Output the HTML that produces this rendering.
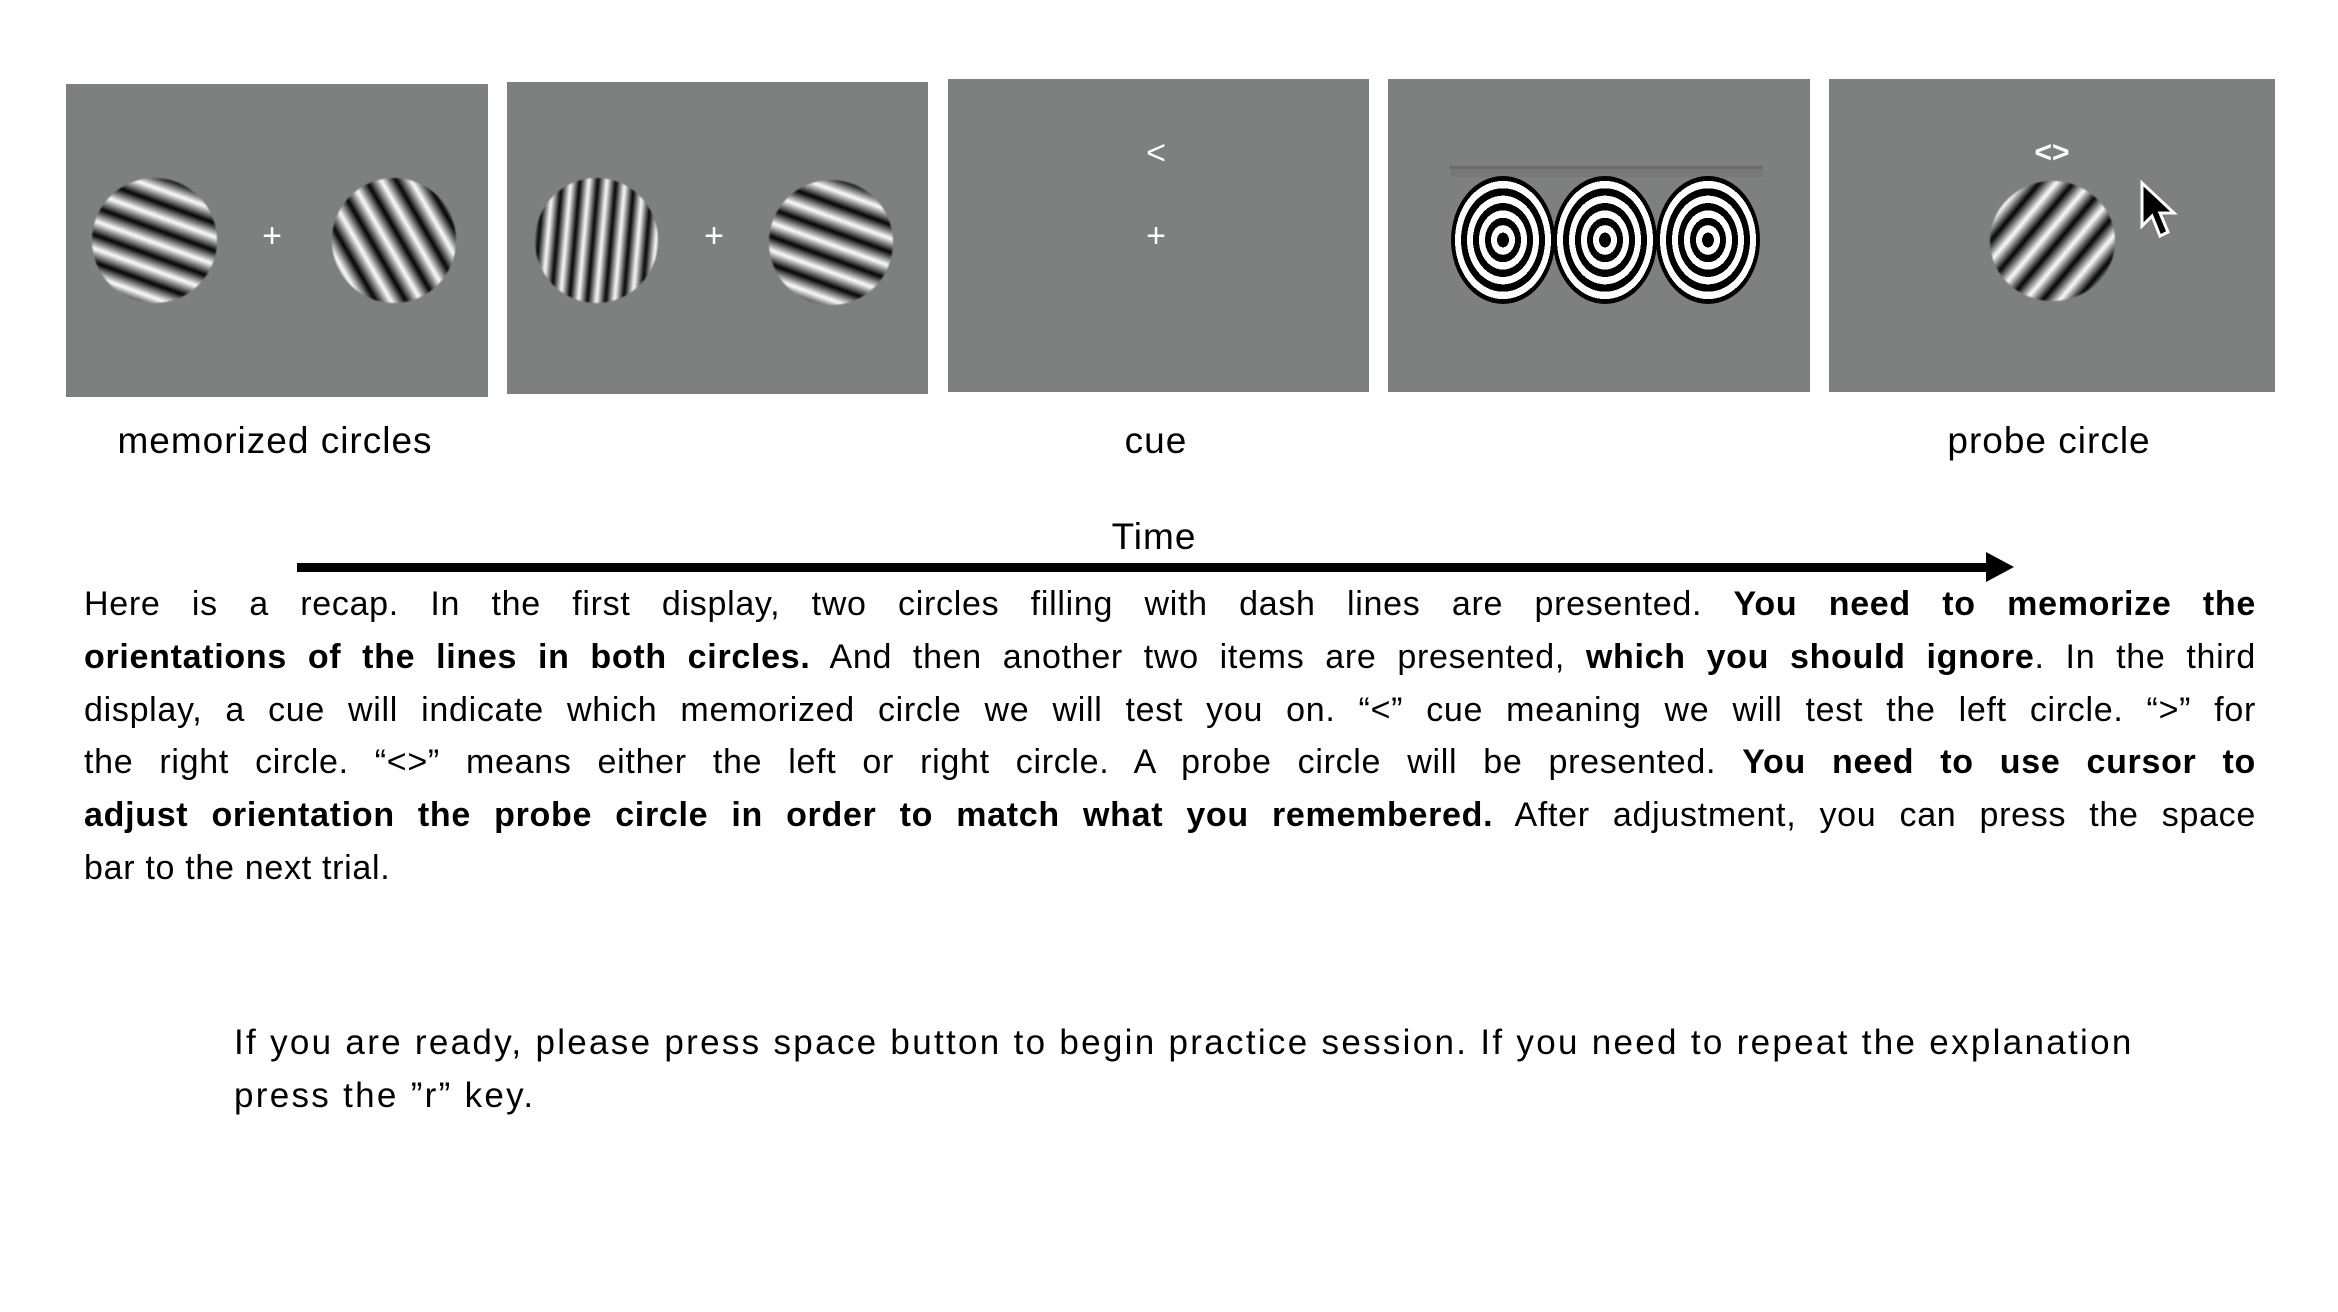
<!DOCTYPE html>
<html><head><meta charset="utf-8"><style>
body{margin:0;width:2338px;height:1312px;background:#fff;position:relative;overflow:hidden;font-family:"Liberation Sans",sans-serif;color:#000}
.p{position:absolute;background:#7e8080}
.g{position:absolute;border-radius:50%;filter:blur(0.8px)}
.plus{position:absolute;color:#fff;font-size:34px;line-height:34px;transform:translate(-50%,-50%)}
.lab{position:absolute;font-size:37px;letter-spacing:1px;transform:translateX(-50%);white-space:nowrap}
.ring{position:absolute;width:104px;height:128px;border-radius:50%;background:repeating-radial-gradient(ellipse at center,#000 0 6px,#fff 6px 12px)}
.para{position:absolute;left:84px;width:2172px;top:578px;font-size:34px;line-height:52.8px;letter-spacing:0.7px}
.para div{text-align:justify;text-align-last:justify}
.para div.last{text-align-last:left}
</style></head><body>
<div class="p" style="left:66px;top:84px;width:422px;height:313px"></div>
<div class="p" style="left:507px;top:82px;width:421px;height:312px"></div>
<div class="p" style="left:948px;top:79px;width:421px;height:313px"></div>
<div class="p" style="left:1388px;top:79px;width:422px;height:313px"></div>
<div class="p" style="left:1829px;top:79px;width:446px;height:313px"></div>

<div class="g" style="left:92px;top:178px;width:125px;height:125px;background:repeating-linear-gradient(20deg,#fff 0,#000 13px,#fff 26px)"></div>
<div class="g" style="left:332px;top:178px;width:124px;height:125px;background:repeating-linear-gradient(60deg,#fff 0,#000 13px,#fff 26px)"></div>
<div class="plus" style="left:272px;top:236px">+</div>

<div class="g" style="left:535px;top:178px;width:123px;height:125px;background:repeating-linear-gradient(95deg,#fff 0,#000 9px,#fff 18px)"></div>
<div class="g" style="left:769px;top:180px;width:124px;height:125px;background:repeating-linear-gradient(20deg,#fff 0,#000 13px,#fff 26px)"></div>
<div class="plus" style="left:714px;top:236px">+</div>

<div class="plus" style="left:1156px;top:153px">&lt;</div>
<div class="plus" style="left:1156px;top:236px">+</div>

<div style="position:absolute;left:1450px;top:166px;width:313px;height:3px;background:#6a6a6a"></div>
<div style="position:absolute;left:1450px;top:169px;width:313px;height:8px;background:#787878"></div>
<div style="position:absolute;left:1450px;top:176px;width:313px;height:128px;overflow:hidden">
<div class="ring" style="left:1px;top:0"></div>
<div class="ring" style="left:103px;top:0"></div>
<div class="ring" style="left:206px;top:0"></div>
</div>

<div class="plus" style="left:2052px;top:153px;font-weight:bold;font-size:30px">&lt;&gt;</div>
<div class="g" style="left:1990px;top:181px;width:125px;height:120px;background:repeating-linear-gradient(130deg,#fff 0,#000 13px,#fff 26px)"></div>
<svg style="position:absolute;left:2138px;top:180px" width="40" height="62" viewBox="0 0 40 62"><path d="M4 3 L4 46 L14 36 L22 56 L30 52 L22 33 L36 33 Z" fill="#000" stroke="#fff" stroke-width="3"/></svg>

<div class="lab" style="left:275px;top:420px">memorized circles</div>
<div class="lab" style="left:1156px;top:420px">cue</div>
<div class="lab" style="left:2049px;top:420px">probe circle</div>
<div class="lab" style="left:1154px;top:516px">Time</div>

<div style="position:absolute;left:297px;top:563px;width:1696px;height:9px;background:#000"></div>
<svg style="position:absolute;left:1986px;top:552px" width="30" height="30"><path d="M0 0 L28 15 L0 30 Z" fill="#000"/></svg>

<div class="para">
<div>Here is a recap. In the first display, two circles filling with dash lines are presented. <b>You need to memorize the</b></div>
<div><b>orientations of the lines in both circles.</b> And then another two items are presented, <b>which you should ignore</b>. In the third</div>
<div>display, a cue will indicate which memorized circle we will test you on. “&lt;” cue meaning we will test the left circle. “&gt;” for</div>
<div>the right circle. “&lt;&gt;” means either the left or right circle. A probe circle will be presented. <b>You need to use cursor to</b></div>
<div><b>adjust orientation the probe circle in order to match what you remembered.</b> After adjustment, you can press the space</div>
<div class="last">bar to the next trial.</div>
</div>

<div style="position:absolute;left:234px;top:1016px;font-size:35px;line-height:53px;letter-spacing:2.3px;white-space:nowrap">If you are ready, please press space button to begin practice session. If you need to repeat the explanation<br>press the ”r” key.</div>
</body></html>
